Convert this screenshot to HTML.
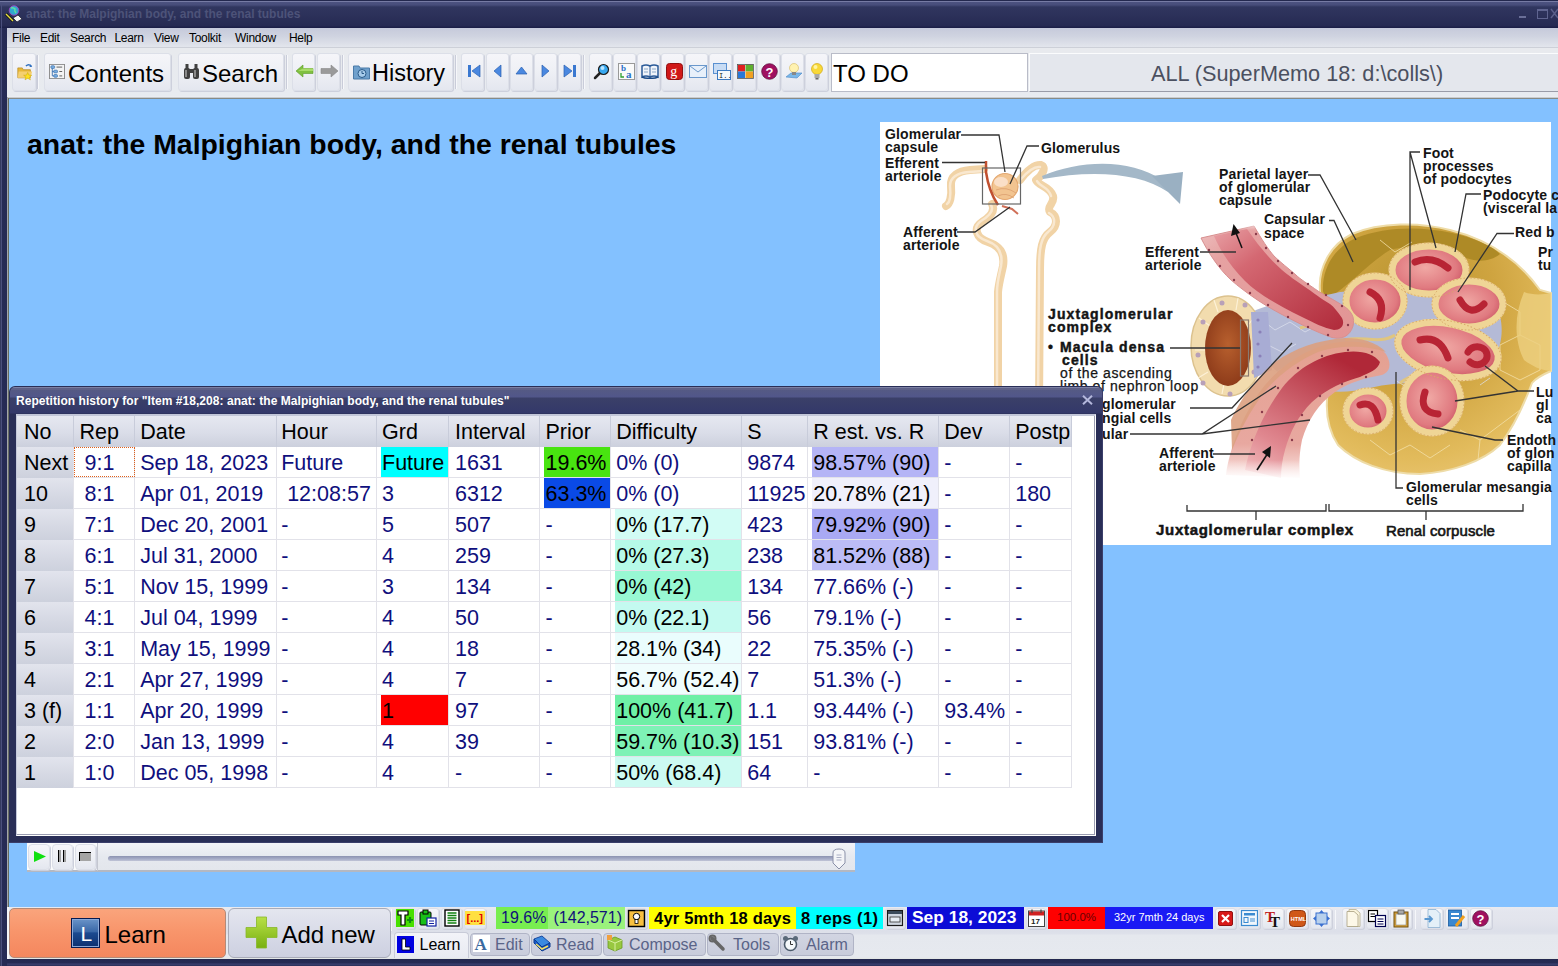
<!DOCTYPE html>
<html><head><meta charset="utf-8">
<style>
*{margin:0;padding:0;box-sizing:border-box}
html,body{width:1558px;height:966px;overflow:hidden;background:#83c1ff;font-family:"Liberation Sans",sans-serif;position:relative}
.a{position:absolute}
svg.a{overflow:visible}
.tb{position:absolute;white-space:pre;line-height:1}
#titlebar{left:0;top:0;width:1558px;height:28px;background:linear-gradient(#23284e 0px,#23284e 1px,#767ba4 1px,#767ba4 2px,#4c5280 2px,#474d7a 5px,#30365f 7px,#2c315a 15px,#262a52 26px,#1c2048 27px,#1c2048 28px)}
#lborder{left:0;top:28px;width:7px;height:938px;background:linear-gradient(90deg,#343a60 0px,#343a60 1px,#4a4f7c 1px,#4a4f7c 2px,#262b55 2px,#252a54 7px)}
#menubar{left:7px;top:28px;width:1551px;height:20px;background:linear-gradient(#c6cadb,#cfd3e0 40%,#dfe2ea 85%,#e4e7ee)}
#toolbar{left:7px;top:47px;width:1551px;height:52px;background:linear-gradient(#e8eaee,#e8ebf0 48px,#eef0f3 49px,#a6a8ac 50px,#a6a8ac 50px,#686e62 51px,#686e62 52px);border-top:1px solid #cdd0d8}
.btn{position:absolute;top:53px;height:38px;border-radius:3px;background:linear-gradient(#f5f5f9,#eef0f5 50%,#e4e7ef);border:1px solid #dcdfe8;box-shadow:1px 1px 0 #cdd0dc}
.sep{position:absolute;top:55px;width:2px;height:34px;background:#c9ccd9;border-right:1px solid #f6f7fa}
.menu span{position:absolute;top:31.5px;font-size:12px;letter-spacing:-0.3px;color:#000;white-space:pre;line-height:1}

.hc{position:absolute;top:0;height:31px;background:linear-gradient(#e6e8f1,#dadde8 55%,#ccd0dd)}
.nc{position:absolute;left:0;width:56px;height:31px;background:linear-gradient(#e2e4ed,#d5d8e3 60%,#cdd1dd)}
.vl{position:absolute;top:0;width:1px;height:372px;background:linear-gradient(#c8ccda 31px,#e2e2e9 31px)}
.hl{position:absolute;left:56px;width:998px;height:1px;background:#e2e2e9}
.cb{position:absolute;height:30px}
.t{position:absolute;white-space:pre;font-size:21.5px;line-height:1;color:#0f0f7d}
.k{color:#000}
</style></head><body>
<div class="a" id="titlebar"></div><div class="a" style="left:1px;top:2px;width:1px;height:26px;background:#4a4f7c"></div>
<div class="a" id="lborder"></div>
<svg class="a" style="left:0;top:0" width="24" height="26" viewBox="0 0 24 26"><path d="M6 14 L13 21" stroke="#111" stroke-width="3"/><path d="M6 14 L13 21" stroke="#e8e040" stroke-width="1.4"/><path d="M13 18 L18 15 L22 19 L17 22 Z" fill="#f4f4f4" stroke="#223" stroke-width="0.8"/><circle cx="14" cy="10.5" r="4.8" fill="#30a8d0" stroke="#a040c0" stroke-width="0.9"/><path d="M11 8 Q13 7 15 9 Q14 11 16 13" stroke="#60e0a0" stroke-width="1.5" fill="none"/></svg>
<div class="tb" style="left:26px;top:8px;font-size:12px;font-weight:bold;color:#4d5379">anat: the Malpighian body, and the renal tubules</div>
<div class="a" style="left:1519px;top:16px;width:7px;height:2px;background:#6a6f98"></div>
<div class="a" style="left:1537px;top:9px;width:11px;height:9.5px;border:1px solid #5f6490;border-top-width:2px"></div><svg class="a" style="left:1550px;top:8px" width="8" height="12" viewBox="0 0 8 12"><path d="M1 1 L8 10 M8 1 L1 10" stroke="#5a5f8a" stroke-width="1.5"/></svg>
<div class="a" id="menubar"></div>
<div class="menu">
<span style="left:12px">File</span><span style="left:40px">Edit</span><span style="left:70px">Search</span><span style="left:114.5px">Learn</span><span style="left:154px">View</span><span style="left:189px">Toolkit</span><span style="left:235px">Window</span><span style="left:289px">Help</span>
</div>
<div class="a" id="toolbar"></div>
<div class="a" style="left:7px;top:97px;width:1px;height:810px;background:#a4a6aa"></div><div class="a" style="left:8px;top:98px;width:1px;height:809px;background:#686e62"></div>
<!-- toolbar buttons -->
<div class="btn" style="left:12px;width:24px"></div>
<div class="sep" style="left:37px"></div>
<div class="btn" style="left:44px;width:127px"></div>
<div class="btn" style="left:178px;width:106px"></div>
<div class="sep" style="left:286px"></div>
<div class="btn" style="left:292px;width:23px"></div>
<div class="btn" style="left:317px;width:23px"></div>
<div class="sep" style="left:342px"></div>
<div class="btn" style="left:348px;width:105px"></div>
<div class="sep" style="left:455px"></div>
<div class="btn" style="left:461px;width:23px"></div>
<div class="btn" style="left:486px;width:23px"></div>
<div class="btn" style="left:510px;width:23px"></div>
<div class="btn" style="left:534px;width:23px"></div>
<div class="btn" style="left:558px;width:23px"></div>
<div class="sep" style="left:583px"></div>
<div class="btn" style="left:589px;width:23px"></div>
<div class="btn" style="left:613px;width:23px"></div>
<div class="btn" style="left:637px;width:23px"></div>
<div class="btn" style="left:661px;width:23px"></div>
<div class="btn" style="left:685px;width:23px"></div>
<div class="btn" style="left:709px;width:23px"></div>
<div class="btn" style="left:733px;width:23px"></div>
<div class="btn" style="left:757px;width:23px"></div>
<div class="btn" style="left:781px;width:23px"></div>
<div class="btn" style="left:805px;width:23px"></div>
<!-- toolbar icons -->
<svg class="a" style="left:16px;top:62px" width="18" height="19" viewBox="0 0 20 20">
<path d="M2 6 L7 6 L8 8 L16 8 L16 17 L2 17 Z" fill="#e8b838" stroke="#b88a20" stroke-width="0.8"/><path d="M3 10 L18 10 L16 17 L2 17 Z" fill="#f5d070"/>
<path d="M11 4 Q14 1 17 4" stroke="#3070c0" stroke-width="1.5" fill="none"/><path d="M16 2 L18 5 L15 5 Z" fill="#3070c0"/>
<path d="M13 11 L14.3 14 L17.5 14.2 L15 16.2 L16 19.3 L13 17.5 L10 19.3 L11 16.2 L8.5 14.2 L11.7 14 Z" fill="#ffe020" stroke="#c0a000" stroke-width="0.5"/></svg>
<svg class="a" style="left:49px;top:64px" width="16" height="15" viewBox="0 0 17 17" preserveAspectRatio="none"><rect x="0.5" y="0.5" width="16" height="16" fill="#f4f4f4" stroke="#8a8a8a"/><g fill="#7ab0e0" stroke="#3a70b0" stroke-width="0.8"><rect x="2" y="2" width="4" height="3" rx="1"/><rect x="5" y="7" width="4" height="3" rx="1"/><rect x="5" y="12" width="4" height="3" rx="1"/></g><path d="M3.5 5 V13.5 H5 M3.5 8.5 H5" stroke="#3a70b0" fill="none"/><path d="M8 3.5 H14 M11 8.5 H14 M11 13.5 H14" stroke="#555" stroke-width="1"/></svg>
<svg class="a" style="left:183px;top:63px" width="17" height="17" viewBox="0 0 17 17"><g fill="#404040"><rect x="1" y="5" width="6" height="11" rx="2"/><rect x="10" y="5" width="6" height="11" rx="2"/><rect x="2.5" y="1" width="3" height="5"/><rect x="11.5" y="1" width="3" height="5"/><rect x="6" y="6" width="5" height="4"/></g><g fill="#8a8a8a"><rect x="2" y="7" width="2" height="7"/><rect x="11" y="7" width="2" height="7"/></g></svg>
<svg class="a" style="left:295px;top:63px" width="19" height="16" viewBox="0 0 19 16"><path d="M1 8 L8 2 L8 5.5 L18 5.5 L18 10.5 L8 10.5 L8 14 Z" fill="#80c040" stroke="#5a9a28" stroke-width="0.6"/><path d="M8 5.5 L18 5.5 L18 8 L3 8 Z" fill="#a8dc68"/></svg>
<svg class="a" style="left:320px;top:63px" width="19" height="16" viewBox="0 0 19 16"><path d="M18 8 L11 2 L11 5.5 L1 5.5 L1 10.5 L11 10.5 L11 14 Z" fill="#9a9a9a" stroke="#888" stroke-width="0.6"/></svg>
<svg class="a" style="left:353px;top:64px" width="17" height="16" viewBox="0 0 17 16"><path d="M0.5 2 L6 2 L7 4 L16.5 4 L16.5 15 L0.5 15 Z" fill="#6fa0cc" stroke="#4a7aa8"/><circle cx="9" cy="9.5" r="4" fill="#a8cceb" stroke="#2a5a88" stroke-width="1"/><path d="M9 7 V9.5 H11" stroke="#2a5a88" fill="none"/></svg>
<svg class="a" style="left:467px;top:64px" width="14" height="14" viewBox="0 0 14 14"><rect x="1" y="1" width="3" height="12" fill="#3a78d0"/><path d="M13 1 L5 7 L13 13 Z" fill="#4a88e0" stroke="#2a60b0" stroke-width="0.7"/></svg>
<svg class="a" style="left:492px;top:64px" width="11" height="14" viewBox="0 0 11 14"><path d="M9 1 L2 7 L9 13 Z" fill="#4a88e0" stroke="#2a60b0" stroke-width="0.7"/></svg>
<svg class="a" style="left:515px;top:66px" width="13" height="9" viewBox="0 0 13 9"><path d="M1 8 L6.5 1 L12 8 Z" fill="#4a88e0" stroke="#2a60b0" stroke-width="0.7"/></svg>
<svg class="a" style="left:540px;top:64px" width="11" height="14" viewBox="0 0 11 14"><path d="M2 1 L9 7 L2 13 Z" fill="#4a88e0" stroke="#2a60b0" stroke-width="0.7"/></svg>
<svg class="a" style="left:563px;top:64px" width="14" height="14" viewBox="0 0 14 14"><rect x="10" y="1" width="3" height="12" fill="#3a78d0"/><path d="M1 1 L9 7 L1 13 Z" fill="#4a88e0" stroke="#2a60b0" stroke-width="0.7"/></svg>
<svg class="a" style="left:593px;top:63px" width="17" height="17" viewBox="0 0 17 17"><path d="M2 15 L7 10" stroke="#222" stroke-width="2.5" stroke-linecap="round"/><circle cx="10.5" cy="6.5" r="5" fill="#38a8f0" stroke="#1a1a1a" stroke-width="1.2"/><circle cx="9.5" cy="5" r="2" fill="#b8e4ff"/></svg>
<svg class="a" style="left:618px;top:63px" width="17" height="17" viewBox="0 0 17 17"><rect x="0.5" y="0.5" width="16" height="16" fill="#fafafa" stroke="#999"/><text x="3" y="8" font-family="Liberation Serif" font-weight="bold" font-size="9" fill="#2a70c8">b</text><text x="8" y="15" font-family="Liberation Serif" font-weight="bold" font-size="11" fill="#2a70c8">a</text><path d="M3 10 V14 H6" stroke="#30a030" stroke-width="1.3" fill="none"/></svg>
<svg class="a" style="left:641px;top:64px" width="18" height="15" viewBox="0 0 18 15"><path d="M1 2 Q5 0 9 2 Q13 0 17 2 L17 13 Q13 11 9 13 Q5 11 1 13 Z" fill="#f0f4fa" stroke="#2a5a98" stroke-width="1.5"/><path d="M9 2 V13" stroke="#2a5a98"/><path d="M3 5 H7 M3 8 H7 M11 5 H15 M11 8 H15" stroke="#8aa8c8"/><path d="M1 13 Q5 15 9 14 Q13 15 17 13" stroke="#1a4a88" stroke-width="1.5" fill="none"/></svg>
<svg class="a" style="left:666px;top:63px" width="17" height="17" viewBox="0 0 17 17"><rect x="0.5" y="0.5" width="16" height="16" rx="3" fill="#d01818" stroke="#901010"/><text x="4.2" y="13" font-family="Liberation Serif" font-size="14" fill="#fff">g</text></svg>
<svg class="a" style="left:689px;top:65px" width="18" height="13" viewBox="0 0 18 13"><rect x="0.5" y="0.5" width="17" height="12" fill="#e8f0fa" stroke="#6a98cc"/><path d="M1 1 L9 7 L17 1" stroke="#6a98cc" fill="none"/></svg>
<svg class="a" style="left:713px;top:63px" width="18" height="17" viewBox="0 0 18 17"><rect x="0.5" y="0.5" width="13" height="10" fill="#c8dcf4" stroke="#5a90d0"/><rect x="4.5" y="7.5" width="13" height="9" fill="#f4f8fc" stroke="#3a78c0"/><text x="6" y="15" font-family="Liberation Mono" font-size="7" fill="#222">I..</text></svg>
<svg class="a" style="left:737px;top:64px" width="17" height="15" viewBox="0 0 17 15"><rect x="1" y="1" width="7" height="6.5" fill="#e02020"/><rect x="8.5" y="0.5" width="7.5" height="7" fill="#60b030"/><rect x="1" y="7.5" width="7" height="6.5" fill="#2878d8"/><rect x="8.5" y="7.5" width="7.5" height="6.5" fill="#f0a020"/><rect x="0.5" y="0.5" width="16" height="14" fill="none" stroke="#555" stroke-width="0.8"/></svg>
<svg class="a" style="left:761px;top:63px" width="17" height="17" viewBox="0 0 17 17"><circle cx="8.5" cy="8.5" r="7.8" fill="#a01060" stroke="#601040" stroke-width="0.8"/><text x="4.6" y="13.5" font-family="Liberation Sans" font-weight="bold" font-size="13" fill="#fff">?</text></svg>
<svg class="a" style="left:785px;top:62px" width="18" height="19" viewBox="0 0 18 19"><path d="M1 15 L6 11 L17 11 L12 16 Z" fill="#7ab8e8" stroke="#4a88c8" stroke-width="0.6"/><circle cx="9" cy="6" r="4.5" fill="#fff2b0" stroke="#d8c070" stroke-width="0.7"/><rect x="7" y="10" width="4" height="3" fill="#888"/></svg>
<svg class="a" style="left:810px;top:62px" width="14" height="19" viewBox="0 0 14 19"><circle cx="7" cy="7" r="5.5" fill="#f8d838" stroke="#d0a818" stroke-width="0.7"/><circle cx="5.5" cy="5" r="2" fill="#fff4a0"/><rect x="4.5" y="12" width="5" height="4" fill="#a8a8a8"/><rect x="5.5" y="16" width="3" height="1.5" fill="#666"/></svg>
<div class="tb" style="left:68px;top:62px;font-size:24px">Contents</div>
<div class="tb" style="left:202px;top:62px;font-size:24px">Search</div>
<div class="tb" style="left:372px;top:62px;font-size:23.5px">History</div>
<div class="a" style="left:831px;top:53px;width:197px;height:39px;background:#fff;border:1px solid #b9bcc8"></div>
<div class="tb" style="left:833px;top:62px;font-size:24px">TO DO</div>
<div class="a" style="left:1029px;top:53px;width:529px;height:39px;background:#e4e7ed;border-top:1px solid #fbfcfd;border-left:1px solid #fbfcfd;border-bottom:1px solid #9a9ca8"></div>
<div class="tb" style="left:1151px;top:63px;font-size:21.7px;color:#4b5060">ALL (SuperMemo 18: d:\colls\)</div>

<!-- content -->
<div class="tb" style="left:27px;top:129.5px;font-size:28.4px;font-weight:bold;color:#000">anat: the Malpighian body, and the renal tubules</div>

<!-- image placeholder -->
<svg class="a" style="left:880px;top:122px" width="671" height="423" viewBox="880 122 671 423">
<defs>
<linearGradient id="lumE" x1="0" y1="0" x2="1" y2="1"><stop offset="0" stop-color="#e8a0a4"/><stop offset="0.3" stop-color="#d46872"/><stop offset="1" stop-color="#b02a3a"/></linearGradient>
<linearGradient id="lumA" x1="0" y1="1" x2="0.6" y2="0"><stop offset="0" stop-color="#f4c4c4"/><stop offset="0.3" stop-color="#e08890"/><stop offset="1" stop-color="#b02838"/></linearGradient>
<linearGradient id="wallE" x1="0" y1="0" x2="1" y2="1"><stop offset="0" stop-color="#eec0c0"/><stop offset="0.2" stop-color="#e6a2a2"/><stop offset="1" stop-color="#e29494"/></linearGradient>
<linearGradient id="wallA" x1="0" y1="1" x2="0" y2="0"><stop offset="0" stop-color="#fbe6e4"/><stop offset="0.25" stop-color="#e8a8a0"/><stop offset="1" stop-color="#e4a090"/></linearGradient>
<radialGradient id="gold" cx="0.4" cy="0.3" r="0.8"><stop offset="0" stop-color="#b89430"/><stop offset="0.45" stop-color="#cfa440"/><stop offset="0.8" stop-color="#e2bb5c"/><stop offset="1" stop-color="#ecc878"/></radialGradient>
<radialGradient id="md" cx="0.5" cy="0.45" r="0.6"><stop offset="0" stop-color="#b8602e"/><stop offset="1" stop-color="#8a3818"/></radialGradient>
<radialGradient id="cap" cx="0.45" cy="0.45" r="0.6"><stop offset="0" stop-color="#f0a8a4"/><stop offset="0.7" stop-color="#e07a80"/><stop offset="1" stop-color="#c85060"/></radialGradient>
<linearGradient id="fadeTop" x1="0" y1="0" x2="0" y2="1"><stop offset="0" stop-color="#fff" stop-opacity="1"/><stop offset="1" stop-color="#fff" stop-opacity="0"/></linearGradient>
</defs>
<rect x="880" y="122" width="671" height="423" fill="#fff"/>
<!-- nephron tubules -->
<g fill="none" stroke="#f1d3a6" stroke-width="8" stroke-linecap="round" stroke-linejoin="round">
<path d="M946 206 C950 204 952 196 951 186 C950 176 958 171 970 170 L984 169"/>
<path d="M992 204 C995 210 992 216 982 222 C973 228 976 238 988 242 C1000 246 1005 254 1003 266 C1001 276 999 282 998 292 L998 545"/>
<path d="M1020 180 C1026 172 1034 164 1041 165 C1047 167 1042 176 1036 180 C1038 186 1050 186 1053 196 C1055 204 1046 206 1050 212 C1058 216 1058 226 1050 232 C1042 238 1040 248 1040 270 L1038 545"/>
</g>
<g fill="none" stroke="#f9e8d0" stroke-width="2.5" stroke-linecap="round" stroke-linejoin="round">
<path d="M947 204 C950 202 951 196 950 186 C950 177 957 173 969 172 L983 171"/>
<path d="M991 205 C994 210 991 215 981 221 C972 228 975 237 987 241 C999 245 1003 254 1001 266 C999 276 997 282 997 292 L997 545"/>
<path d="M1021 179 C1027 172 1034 166 1040 167 M1037 181 C1040 187 1049 187 1051 196 M1049 213 C1056 217 1056 226 1048 232 C1041 238 1039 248 1039 270 L1037 545"/>
</g>
<circle cx="1005" cy="186.5" r="13" fill="#f2c490" stroke="#e4a870" stroke-width="1.2"/>
<ellipse cx="1001" cy="182" rx="7" ry="5" fill="#fbe6d4" opacity="0.8"/>
<path d="M996 190 Q1006 186 1016 193 M998 196 Q1006 192 1014 198" stroke="#dca070" fill="none" stroke-width="0.8"/>
<path d="M986 161 L986 172 C988 186 992 196 998 205" stroke="#c05030" stroke-width="2.5" fill="none"/>
<path d="M1002 206 L1012 209 L1018 214" stroke="#d07058" stroke-width="2" fill="none"/>
<rect x="982.5" y="168" width="38" height="36" fill="none" stroke="#666" stroke-width="1.2"/>
<!-- arrow -->
<path d="M1042 176 C1080 160 1130 158 1162 180 L1168 192 C1140 172 1090 170 1043 179 Z" fill="#a4b8c8"/>
<path d="M1152 176 L1183 172 L1180 204 Z" fill="#9ab0c2"/>
<!-- golden capsule -->
<path d="M1320 291 C1318 268 1330 245 1352 234 C1380 222 1420 222 1450 230 C1490 240 1520 262 1540 290 L1551 293 L1551 371 C1544 374 1536 378 1532 383 C1525 402 1515 425 1500 445 C1482 462 1452 472 1420 474 C1385 474 1355 462 1338 445 C1328 430 1325 410 1328 390 Z" fill="url(#gold)" stroke="#eedca8" stroke-width="2"/>
<path d="M1323 291 C1322 268 1334 248 1356 238 C1384 227 1420 226 1452 233 C1475 238 1492 246 1500 254 C1490 262 1478 262 1466 258 C1440 248 1410 244 1390 250 C1370 262 1350 285 1326 300 Z" fill="#ae8a26"/>
<g fill="none" stroke="#f4e0a8" stroke-width="1" opacity="0.8">
<path d="M1500 300 L1520 312 L1520 335 L1500 345 L1482 335 L1482 312 Z"/>
<path d="M1520 335 L1540 345 L1540 370 L1520 380 L1500 370 L1500 345"/>
<path d="M1460 430 L1480 440 L1478 460 M1480 440 L1500 425 L1520 410"/>
<path d="M1370 440 L1390 455 L1410 445 L1430 458 L1450 445"/>
<path d="M1342 300 L1358 290 L1372 300 M1380 240 L1395 252 L1412 242"/>
</g>
<path d="M1524 292 C1535 296 1545 294 1551 293 L1551 371 C1540 370 1532 366 1524 360 C1514 340 1514 315 1524 292 Z" fill="#eccf80" opacity="0.8"/>
<!-- mesangial blue region -->
<path d="M1252 312 C1275 300 1310 300 1340 292 C1400 286 1470 296 1500 316 C1506 340 1496 370 1470 380 C1440 384 1400 380 1370 388 C1340 395 1315 392 1292 380 C1265 368 1250 345 1252 312 Z" fill="#b4bad6"/>
<g fill="none" stroke="#dfe3f0" stroke-width="0.8" opacity="0.9">
<path d="M1262 320 L1275 330 L1290 322 L1305 332 L1320 324 M1268 345 L1282 352 L1296 344 M1262 365 L1276 372 L1290 364 L1304 372"/>
<path d="M1410 330 L1420 340 L1432 333 M1395 380 L1408 388 L1420 380 M1480 385 L1490 378"/>
</g>
<g fill="none" stroke="#e8c870" stroke-width="3" opacity="0.85"><path d="M1345 340 C1360 335 1380 345 1395 335"/><path d="M1330 380 C1345 372 1360 378 1380 372"/><path d="M1400 383 C1410 375 1425 372 1440 376"/><path d="M1300 328 C1320 322 1335 330 1352 322"/></g>
<!-- macula densa -->
<ellipse cx="1228" cy="346" rx="37" ry="50" fill="#f2dcae" stroke="#dcc28e" stroke-width="1.5"/>
<g stroke="#fff4dc" stroke-width="1.2" opacity="0.9"><path d="M1199 318 L1210 326 M1214 300 L1218 312 M1238 298 L1236 310 M1195 350 L1206 350 M1198 378 L1208 372 M1222 394 L1224 384 M1252 320 L1246 328"/></g>
<ellipse cx="1228" cy="348" rx="23" ry="38" fill="url(#md)"/>
<g fill="#b8a0b8"><circle cx="1203" cy="322" r="2.5"/><circle cx="1222" cy="303" r="2.5"/><circle cx="1245" cy="305" r="2.5"/><circle cx="1198" cy="355" r="2.5"/><circle cx="1203" cy="383" r="2.5"/><circle cx="1230" cy="394" r="2.5"/><circle cx="1254" cy="372" r="2.5"/></g>
<path d="M1251 312 L1268 312 L1272 370 L1254 378 Z" fill="#a8acd4"/>
<g fill="#8a80b8"><circle cx="1258" cy="320" r="1.6"/><circle cx="1260" cy="332" r="1.6"/><circle cx="1258" cy="344" r="1.6"/><circle cx="1260" cy="356" r="1.6"/><circle cx="1258" cy="367" r="1.6"/></g>
<rect x="1240.5" y="320" width="8" height="56" fill="none" stroke="#8a7a70" stroke-width="1.2"/>
<!-- capillary loops -->
<g stroke="#efd596" stroke-width="7">
<ellipse cx="1429" cy="270" rx="37" ry="24" fill="url(#cap)"/>
<ellipse cx="1375" cy="301" rx="29" ry="25" fill="url(#cap)"/>
<ellipse cx="1469" cy="304" rx="34" ry="23" fill="url(#cap)"/>
<ellipse cx="1448" cy="350" rx="51" ry="26" fill="url(#cap)" transform="rotate(12 1448 350)"/>
<ellipse cx="1432" cy="401" rx="29" ry="32" fill="url(#cap)"/>
<ellipse cx="1368" cy="411" rx="22" ry="20" fill="url(#cap)"/>
</g>
<g fill="none" stroke="#d8a868" stroke-width="1" stroke-dasharray="1.5 2">
<ellipse cx="1429" cy="270" rx="40" ry="27"/><ellipse cx="1375" cy="301" rx="32" ry="28"/><ellipse cx="1469" cy="304" rx="37" ry="26"/><ellipse cx="1448" cy="350" rx="54" ry="29" transform="rotate(12 1448 350)"/><ellipse cx="1432" cy="401" rx="32" ry="35"/><ellipse cx="1368" cy="411" rx="25" ry="23"/>
</g>
<g fill="none" stroke="#b82434" stroke-width="7" stroke-linecap="round">
<path d="M1415 262 Q1432 255 1448 268"/><path d="M1370 292 Q1386 300 1380 318"/><path d="M1460 300 Q1470 318 1484 304"/><path d="M1420 340 Q1440 335 1448 358"/><path d="M1468 352 A10 9 0 1 1 1470 362"/><path d="M1425 392 Q1418 412 1438 414"/><path d="M1360 405 Q1374 400 1378 420"/>
</g>
<!-- efferent arteriole -->
<path d="M1201 238 C1208 252 1218 268 1231 280 C1245 292 1262 304 1281 314 C1298 323 1316 332 1332 337.5 C1342 340 1350 336 1353 326 C1355 318 1352 313 1347 308.5 C1340 303 1326 296 1318 291 C1308 284 1300 279 1296 275 C1288 268 1280 262 1274 256 C1268 249 1262 240 1254 226 Z" fill="url(#wallE)" stroke="#d89090" stroke-width="1"/>
<path d="M1214 236 C1220 250 1230 266 1245 281 C1258 294 1280 306 1300 316 C1314 323 1324 328 1334 330 C1342 330 1345 324 1342 318 C1338 312 1334 307 1330 304 C1320 298 1314 293 1308 289 C1296 281 1288 275 1282 270 C1272 261 1266 254 1262 249 C1256 242 1252 236 1247 229 Z" fill="url(#lumE)"/>
<g fill="#8a3a4a"><circle cx="1209" cy="250" r="1.2"/><circle cx="1220" cy="266" r="1.2"/><circle cx="1234" cy="280" r="1.2"/><circle cx="1250" cy="293" r="1.2"/><circle cx="1268" cy="305" r="1.2"/><circle cx="1288" cy="317" r="1.2"/><circle cx="1308" cy="327" r="1.2"/><circle cx="1328" cy="335" r="1.2"/><circle cx="1348" cy="325" r="1.2"/><circle cx="1256" cy="234" r="1.2"/><circle cx="1266" cy="248" r="1.2"/><circle cx="1278" cy="261" r="1.2"/><circle cx="1292" cy="273" r="1.2"/><circle cx="1308" cy="284" r="1.2"/><circle cx="1326" cy="295" r="1.2"/><circle cx="1342" cy="306" r="1.2"/></g>
<rect x="1195" y="220" width="70" height="10" fill="url(#fadeTop)"/>
<!-- afferent arteriole -->
<path d="M1226 475 C1230 445 1245 410 1265 385 C1285 362 1310 346 1340 342 C1360 340 1378 344 1386 354 C1392 364 1390 372 1382 375 C1365 378 1350 382 1335 392 C1318 404 1308 420 1302 440 C1299 455 1299 465 1300 478 Z" fill="url(#wallA)"/>
<path d="M1231 420 C1240 400 1255 378 1275 362 C1295 348 1318 340 1345 338 C1362 338 1376 342 1386 352 C1370 346 1340 344 1318 352 C1295 362 1275 378 1262 395 C1250 412 1240 430 1232 450 Z" fill="#dca080" opacity="0.9"/>
<path d="M1245 470 C1250 445 1262 415 1282 388 C1298 368 1320 355 1345 352 C1362 350 1374 354 1380 362 C1378 370 1370 372 1360 377 C1345 381 1328 388 1312 402 C1298 416 1290 432 1285 450 C1282 460 1281 470 1281 478 Z" fill="url(#lumA)"/>
<g fill="#8a3a4a"><circle cx="1252" cy="440" r="1.2"/><circle cx="1262" cy="412" r="1.2"/><circle cx="1278" cy="388" r="1.2"/><circle cx="1298" cy="368" r="1.2"/><circle cx="1322" cy="356" r="1.2"/><circle cx="1348" cy="350" r="1.2"/><circle cx="1372" cy="352" r="1.2"/><circle cx="1292" cy="440" r="1.2"/><circle cx="1302" cy="415" r="1.2"/><circle cx="1320" cy="396" r="1.2"/><circle cx="1342" cy="384" r="1.2"/><circle cx="1366" cy="377" r="1.2"/></g>
<rect x="1215" y="460" width="95" height="20" fill="url(#fadeTop)" transform="rotate(180 1262 470)"/>
<!-- leader lines -->
<g fill="none" stroke="#333" stroke-width="1.3">
<path d="M961 135 L999 135 L1005 172"/>
<path d="M942 162.5 L985 162.5"/>
<path d="M1039 146 L1027 146 L1010 184"/>
<path d="M957 232 L975 232 L1010 207"/>
<path d="M1308 175 L1320 175 L1356 240"/>
<path d="M1329 220.5 L1334 220.5 L1353 262"/>
<path d="M1200 252 L1236 252"/>
<path d="M1420 152 L1410 152 L1410 290 M1410 152 L1436 248"/>
<path d="M1481 194 L1466 194 L1455 252"/>
<path d="M1514 233.5 L1497 233.5 L1458 292"/>
<path d="M1170 348 L1240 348"/>
<path d="M1190 408 L1232 408 L1292 343"/>
<path d="M1130 434 L1202 434 L1276 386 M1202 434 L1310 420"/>
<path d="M1213 454 L1255 454"/>
<path d="M1534 391 L1518 391 L1485 366 M1518 391 L1455 401"/>
<path d="M1503 440 L1495 440 L1432 427"/>
<path d="M1403 488 L1396 488 L1396 372"/>
<path d="M1187 505 L1187 511 L1326 511 L1326 504 M1256 511 L1256 520"/>
<path d="M1329 504 L1329 511 L1523 511 L1523 504 M1426 511 L1426 520"/>
</g>
<path d="M1242 248 L1236 233" stroke="#111" stroke-width="1.5"/><path d="M1231 236 L1233.5 224 L1240 233 Z" fill="#111"/>
<path d="M1257 470 L1268 453" stroke="#111" stroke-width="1.6"/><path d="M1262 452 L1271 446 L1270 458 Z" fill="#111"/>
<!-- labels -->
<g font-family="Liberation Sans" font-weight="bold" font-size="14" fill="#141414" letter-spacing="0.15" transform="translate(0 1.5)">
<text x="885" y="137">Glomerular</text><text x="885" y="150">capsule</text>
<text x="885" y="166">Efferent</text><text x="885" y="179">arteriole</text>
<text x="1041" y="151">Glomerulus</text>
<text x="903" y="235">Afferent</text><text x="903" y="248">arteriole</text>
<text x="1219" y="177">Parietal layer</text><text x="1219" y="190">of glomerular</text><text x="1219" y="203">capsule</text>
<text x="1264" y="222">Capsular</text><text x="1264" y="236">space</text>
<text x="1145" y="255">Efferent</text><text x="1145" y="268">arteriole</text>
<text x="1423" y="156">Foot</text><text x="1423" y="169">processes</text><text x="1423" y="182">of podocytes</text>
<text x="1483" y="198">Podocyte c</text><text x="1483" y="211">(visceral la</text>
<text x="1515" y="235">Red b</text>
<text x="1538" y="255">Pr</text><text x="1538" y="268">tu</text>
<g letter-spacing="1.1" stroke="#141414" stroke-width="0.45"><text x="1048" y="317">Juxtaglomerular</text><text x="1048" y="330">complex</text>
<text x="1048" y="350">•</text><text x="1060" y="350">Macula densa</text><text x="1062" y="363">cells</text></g>
<text x="1102" y="407">glomerular</text><text x="1102" y="421">ngial cells</text><text x="1102" y="437">ular</text>
<text x="1159" y="456">Afferent</text><text x="1159" y="469">arteriole</text>
<text x="1536" y="395">Lu</text><text x="1536" y="408">gl</text><text x="1536" y="421">ca</text>
<text x="1507" y="443">Endoth</text><text x="1507" y="456">of glon</text><text x="1507" y="469">capilla</text>
<text x="1406" y="490">Glomerular mesangia</text><text x="1406" y="503">cells</text>
<text x="1156" y="533" letter-spacing="0.7" font-size="15" stroke="#141414" stroke-width="0.5">Juxtaglomerular complex</text>
</g>
<g font-family="Liberation Sans" font-size="14" fill="#141414" transform="translate(0 1)">
<text x="1060" y="377" letter-spacing="0.6" stroke="#141414" stroke-width="0.25">of the ascending</text><text x="1060" y="390" letter-spacing="0.6" stroke="#141414" stroke-width="0.25">limb of nephron loop</text>
<text x="1386" y="534.5" font-size="15" stroke="#141414" stroke-width="0.6" letter-spacing="0.1">Renal corpuscle</text>
</g>
</svg>


<!-- dialog -->
<div class="a" style="left:9px;top:386px;width:1094px;height:457px;background:#292e57;border-radius:6px 6px 0 0;box-shadow:inset -1px -1px 0 #3a3e6a"></div>
<div class="a" style="left:10px;top:387px;width:1092px;height:27px;border-radius:5px 5px 0 0;background:linear-gradient(#7c80a3 0px,#7c80a3 1px,#5e6188 1px,#5e6188 3px,#555a84 3px,#51568a 10px,#3b4068 11px,#33386a 26px,#2a2e56 27px)"></div>
<div class="tb" style="left:16px;top:394.5px;font-size:12px;font-weight:bold;color:#fff;letter-spacing:0.05px">Repetition history for "Item #18,208: anat: the Malpighian body, and the renal tubules"</div>
<svg class="a" style="left:1082px;top:395px" width="11" height="10" viewBox="0 0 11 10"><path d="M1 0.8 L10 9.2 M10 0.8 L1 9.2" stroke="#b4b8dc" stroke-width="2"/></svg>
<div class="a" style="left:16px;top:414px;width:1080px;height:422px;background:#fff;border:1px solid #fff;border-top:2px solid #c2c6d8;border-left-color:#c4c8da;box-shadow:inset -1px -1px 0 #9a9cb0"></div>
<div class="a" style="left:17px;top:416px;width:1054px;height:372px">
<div class="hc" style="left:0px;width:56px"></div>
<div class="hc" style="left:56px;width:61px"></div>
<div class="hc" style="left:117px;width:142px"></div>
<div class="hc" style="left:259px;width:100px"></div>
<div class="hc" style="left:359px;width:72px"></div>
<div class="hc" style="left:431px;width:91px"></div>
<div class="hc" style="left:522px;width:71px"></div>
<div class="hc" style="left:593px;width:131px"></div>
<div class="hc" style="left:724px;width:66px"></div>
<div class="hc" style="left:790px;width:131px"></div>
<div class="hc" style="left:921px;width:71px"></div>
<div class="hc" style="left:992px;width:62px"></div>
<div class="nc" style="top:31px"></div>
<div class="nc" style="top:62px"></div>
<div class="nc" style="top:93px"></div>
<div class="nc" style="top:124px"></div>
<div class="nc" style="top:155px"></div>
<div class="nc" style="top:186px"></div>
<div class="nc" style="top:217px"></div>
<div class="nc" style="top:248px"></div>
<div class="nc" style="top:279px"></div>
<div class="nc" style="top:310px"></div>
<div class="nc" style="top:341px"></div>
<div class="vl" style="left:56px"></div>
<div class="vl" style="left:117px"></div>
<div class="vl" style="left:259px"></div>
<div class="vl" style="left:359px"></div>
<div class="vl" style="left:431px"></div>
<div class="vl" style="left:522px"></div>
<div class="vl" style="left:593px"></div>
<div class="vl" style="left:724px"></div>
<div class="vl" style="left:790px"></div>
<div class="vl" style="left:921px"></div>
<div class="vl" style="left:992px"></div>
<div class="vl" style="left:1054px"></div>
<div class="hl" style="top:61px"></div>
<div class="hl" style="top:92px"></div>
<div class="hl" style="top:123px"></div>
<div class="hl" style="top:154px"></div>
<div class="hl" style="top:185px"></div>
<div class="hl" style="top:216px"></div>
<div class="hl" style="top:247px"></div>
<div class="hl" style="top:278px"></div>
<div class="hl" style="top:309px"></div>
<div class="hl" style="top:340px"></div>
<div class="hl" style="top:371px"></div>
<div class="t k" style="left:7px;top:6px">No</div>
<div class="t k" style="left:62.5px;top:6px">Rep</div>
<div class="t k" style="left:123.19999999999999px;top:6px">Date</div>
<div class="t k" style="left:264.2px;top:6px">Hour</div>
<div class="t k" style="left:365px;top:6px">Grd</div>
<div class="t k" style="left:438px;top:6px">Interval</div>
<div class="t k" style="left:528.5px;top:6px">Prior</div>
<div class="t k" style="left:599.2px;top:6px">Difficulty</div>
<div class="t k" style="left:730.2px;top:6px">S</div>
<div class="t k" style="left:796.2px;top:6px">R est. vs. R</div>
<div class="t k" style="left:927.2px;top:6px">Dev</div>
<div class="t k" style="left:998.2px;top:6px">Postp</div>
<div class="t k" style="left:7px;top:37px">Next</div>
<div class="t" style="left:67.5px;top:37px">9:1</div>
<div class="t" style="left:123.19999999999999px;top:37px">Sep 18, 2023</div>
<div class="t" style="left:264.2px;top:37px">Future</div>
<div class="cb" style="left:364px;top:31px;width:67px;background:#00ffff"></div>
<div class="t k" style="left:365px;top:37px">Future</div>
<div class="t" style="left:438px;top:37px">1631</div>
<div class="cb" style="left:527px;top:31px;width:66px;background:#48e410"></div>
<div class="t k" style="left:528.5px;top:37px">19.6%</div>
<div class="t" style="left:599.2px;top:37px">0% (0)</div>
<div class="t" style="left:730.2px;top:37px">9874</div>
<div class="cb" style="left:795px;top:31px;width:126px;background:#b4b4f6"></div>
<div class="t k" style="left:796.2px;top:37px">98.57% (90)</div>
<div class="t" style="left:927.2px;top:37px">-</div>
<div class="t" style="left:998.2px;top:37px">-</div>
<div class="t k" style="left:7px;top:68px">10</div>
<div class="t" style="left:67.5px;top:68px">8:1</div>
<div class="t" style="left:123.19999999999999px;top:68px">Apr 01, 2019</div>
<div class="t" style="left:264.2px;top:68px"> 12:08:57</div>
<div class="t" style="left:365px;top:68px">3</div>
<div class="t" style="left:438px;top:68px">6312</div>
<div class="cb" style="left:527px;top:62px;width:66px;background:#0a4ae6"></div>
<div class="t k" style="left:528.5px;top:68px">63.3%</div>
<div class="t" style="left:599.2px;top:68px">0% (0)</div>
<div class="t" style="left:730.2px;top:68px">11925</div>
<div class="cb" style="left:795px;top:62px;width:126px;background:#f0f0fb"></div>
<div class="t k" style="left:796.2px;top:68px">20.78% (21)</div>
<div class="t" style="left:927.2px;top:68px">-</div>
<div class="t" style="left:998.2px;top:68px">180</div>
<div class="t k" style="left:7px;top:99px">9</div>
<div class="t" style="left:67.5px;top:99px">7:1</div>
<div class="t" style="left:123.19999999999999px;top:99px">Dec 20, 2001</div>
<div class="t" style="left:264.2px;top:99px">-</div>
<div class="t" style="left:365px;top:99px">5</div>
<div class="t" style="left:438px;top:99px">507</div>
<div class="t" style="left:528.5px;top:99px">-</div>
<div class="cb" style="left:598px;top:93px;width:126px;background:#d2fcf5"></div>
<div class="t k" style="left:599.2px;top:99px">0% (17.7)</div>
<div class="t" style="left:730.2px;top:99px">423</div>
<div class="cb" style="left:795px;top:93px;width:126px;background:#a9a9f4"></div>
<div class="t k" style="left:796.2px;top:99px">79.92% (90)</div>
<div class="t" style="left:927.2px;top:99px">-</div>
<div class="t" style="left:998.2px;top:99px">-</div>
<div class="t k" style="left:7px;top:130px">8</div>
<div class="t" style="left:67.5px;top:130px">6:1</div>
<div class="t" style="left:123.19999999999999px;top:130px">Jul 31, 2000</div>
<div class="t" style="left:264.2px;top:130px">-</div>
<div class="t" style="left:365px;top:130px">4</div>
<div class="t" style="left:438px;top:130px">259</div>
<div class="t" style="left:528.5px;top:130px">-</div>
<div class="cb" style="left:598px;top:124px;width:126px;background:#b6fae8"></div>
<div class="t k" style="left:599.2px;top:130px">0% (27.3)</div>
<div class="t" style="left:730.2px;top:130px">238</div>
<div class="cb" style="left:795px;top:124px;width:126px;background:#bcbcf6"></div>
<div class="t k" style="left:796.2px;top:130px">81.52% (88)</div>
<div class="t" style="left:927.2px;top:130px">-</div>
<div class="t" style="left:998.2px;top:130px">-</div>
<div class="t k" style="left:7px;top:161px">7</div>
<div class="t" style="left:67.5px;top:161px">5:1</div>
<div class="t" style="left:123.19999999999999px;top:161px">Nov 15, 1999</div>
<div class="t" style="left:264.2px;top:161px">-</div>
<div class="t" style="left:365px;top:161px">3</div>
<div class="t" style="left:438px;top:161px">134</div>
<div class="t" style="left:528.5px;top:161px">-</div>
<div class="cb" style="left:598px;top:155px;width:126px;background:#98f8d3"></div>
<div class="t k" style="left:599.2px;top:161px">0% (42)</div>
<div class="t" style="left:730.2px;top:161px">134</div>
<div class="t" style="left:796.2px;top:161px">77.66% (-)</div>
<div class="t" style="left:927.2px;top:161px">-</div>
<div class="t" style="left:998.2px;top:161px">-</div>
<div class="t k" style="left:7px;top:192px">6</div>
<div class="t" style="left:67.5px;top:192px">4:1</div>
<div class="t" style="left:123.19999999999999px;top:192px">Jul 04, 1999</div>
<div class="t" style="left:264.2px;top:192px">-</div>
<div class="t" style="left:365px;top:192px">4</div>
<div class="t" style="left:438px;top:192px">50</div>
<div class="t" style="left:528.5px;top:192px">-</div>
<div class="cb" style="left:598px;top:186px;width:126px;background:#c4faf0"></div>
<div class="t k" style="left:599.2px;top:192px">0% (22.1)</div>
<div class="t" style="left:730.2px;top:192px">56</div>
<div class="t" style="left:796.2px;top:192px">79.1% (-)</div>
<div class="t" style="left:927.2px;top:192px">-</div>
<div class="t" style="left:998.2px;top:192px">-</div>
<div class="t k" style="left:7px;top:223px">5</div>
<div class="t" style="left:67.5px;top:223px">3:1</div>
<div class="t" style="left:123.19999999999999px;top:223px">May 15, 1999</div>
<div class="t" style="left:264.2px;top:223px">-</div>
<div class="t" style="left:365px;top:223px">4</div>
<div class="t" style="left:438px;top:223px">18</div>
<div class="t" style="left:528.5px;top:223px">-</div>
<div class="cb" style="left:598px;top:217px;width:126px;background:#eafdfd"></div>
<div class="t k" style="left:599.2px;top:223px">28.1% (34)</div>
<div class="t" style="left:730.2px;top:223px">22</div>
<div class="t" style="left:796.2px;top:223px">75.35% (-)</div>
<div class="t" style="left:927.2px;top:223px">-</div>
<div class="t" style="left:998.2px;top:223px">-</div>
<div class="t k" style="left:7px;top:254px">4</div>
<div class="t" style="left:67.5px;top:254px">2:1</div>
<div class="t" style="left:123.19999999999999px;top:254px">Apr 27, 1999</div>
<div class="t" style="left:264.2px;top:254px">-</div>
<div class="t" style="left:365px;top:254px">4</div>
<div class="t" style="left:438px;top:254px">7</div>
<div class="t" style="left:528.5px;top:254px">-</div>
<div class="cb" style="left:598px;top:248px;width:126px;background:#f0fdfd"></div>
<div class="t k" style="left:599.2px;top:254px">56.7% (52.4)</div>
<div class="t" style="left:730.2px;top:254px">7</div>
<div class="t" style="left:796.2px;top:254px">51.3% (-)</div>
<div class="t" style="left:927.2px;top:254px">-</div>
<div class="t" style="left:998.2px;top:254px">-</div>
<div class="t k" style="left:7px;top:285px">3 (f)</div>
<div class="t" style="left:67.5px;top:285px">1:1</div>
<div class="t" style="left:123.19999999999999px;top:285px">Apr 20, 1999</div>
<div class="t" style="left:264.2px;top:285px">-</div>
<div class="cb" style="left:364px;top:279px;width:67px;background:#ff0000"></div>
<div class="t k" style="left:365px;top:285px">1</div>
<div class="t" style="left:438px;top:285px">97</div>
<div class="t" style="left:528.5px;top:285px">-</div>
<div class="cb" style="left:598px;top:279px;width:126px;background:#6ef0a6"></div>
<div class="t k" style="left:599.2px;top:285px">100% (41.7)</div>
<div class="t" style="left:730.2px;top:285px">1.1</div>
<div class="t" style="left:796.2px;top:285px">93.44% (-)</div>
<div class="t" style="left:927.2px;top:285px">93.4%</div>
<div class="t" style="left:998.2px;top:285px">-</div>
<div class="t k" style="left:7px;top:316px">2</div>
<div class="t" style="left:67.5px;top:316px">2:0</div>
<div class="t" style="left:123.19999999999999px;top:316px">Jan 13, 1999</div>
<div class="t" style="left:264.2px;top:316px">-</div>
<div class="t" style="left:365px;top:316px">4</div>
<div class="t" style="left:438px;top:316px">39</div>
<div class="t" style="left:528.5px;top:316px">-</div>
<div class="cb" style="left:598px;top:310px;width:126px;background:#7ef2b6"></div>
<div class="t k" style="left:599.2px;top:316px">59.7% (10.3)</div>
<div class="t" style="left:730.2px;top:316px">151</div>
<div class="t" style="left:796.2px;top:316px">93.81% (-)</div>
<div class="t" style="left:927.2px;top:316px">-</div>
<div class="t" style="left:998.2px;top:316px">-</div>
<div class="t k" style="left:7px;top:347px">1</div>
<div class="t" style="left:67.5px;top:347px">1:0</div>
<div class="t" style="left:123.19999999999999px;top:347px">Dec 05, 1998</div>
<div class="t" style="left:264.2px;top:347px">-</div>
<div class="t" style="left:365px;top:347px">4</div>
<div class="t" style="left:438px;top:347px">-</div>
<div class="t" style="left:528.5px;top:347px">-</div>
<div class="cb" style="left:598px;top:341px;width:126px;background:#ccfaf2"></div>
<div class="t k" style="left:599.2px;top:347px">50% (68.4)</div>
<div class="t" style="left:730.2px;top:347px">64</div>
<div class="t" style="left:796.2px;top:347px">-</div>
<div class="t" style="left:927.2px;top:347px">-</div>
<div class="t" style="left:998.2px;top:347px">-</div>
<div class="a" style="left:57px;top:31px;width:60.5px;height:30px;border:1px dotted #e0601a"></div>
</div>
<!-- media bar -->
<div class="a" style="left:27px;top:843px;width:828px;height:29px;background:linear-gradient(#f2f3f7,#e6e9ef 50%,#e3e6ec);border-bottom:2px solid #b4b8c2"></div>
<div class="a" style="left:27px;top:843px;width:70px;height:27px;background:#fafbfc"></div>
<div class="a" style="left:97px;top:843px;width:1px;height:28px;background:#c4c7d0"></div>
<div class="btn" style="left:28px;top:844px;width:22px;height:26px;border-radius:4px"></div>
<div class="btn" style="left:52px;top:844px;width:21px;height:26px;border-radius:4px"></div>
<div class="btn" style="left:75px;top:844px;width:21px;height:26px;border-radius:4px"></div>
<svg class="a" style="left:33px;top:850px" width="14" height="14" viewBox="0 0 14 14"><path d="M1 1 L13 6.5 L1 12 Z" fill="#10e010"/></svg>
<div class="a" style="left:58px;top:850px;width:3px;height:12px;background:#a0a0a0;border-left:1.5px solid #000"></div>
<div class="a" style="left:63px;top:850px;width:3px;height:12px;background:#a0a0a0;border-left:1.5px solid #000"></div>
<div class="a" style="left:79px;top:852px;width:12px;height:9px;background:#a4a4a4;border-top:1.5px solid #000;border-left:1.5px solid #000"></div>
<div class="a" style="left:108px;top:855.5px;width:732px;height:5px;border-radius:3px;background:linear-gradient(#8c92b0,#a8adc8 60%,#c0c4d6)"></div>
<svg class="a" style="left:832px;top:848px" width="14" height="22" viewBox="0 0 14 22"><path d="M1 5 Q1 1 7 1 Q13 1 13 5 L13 15 L7 21 L1 15 Z" fill="#f4f5f8" stroke="#8a90a8" stroke-width="1"/><path d="M4.5 7 H9.5 M4.5 9.5 H9.5 M4.5 12 H9.5" stroke="#9aa0b8" stroke-width="0.8"/></svg>

<!-- bottom panel -->
<div class="a" style="left:7px;top:907px;width:1551px;height:52px;background:linear-gradient(#e9ebf0 0px,#e4e6ee 4px,#e2e4ec 15px,#dcdfe9 24px,#dee1ea 27px,#e5e8ee 28px,#e6e9ef 50px,#e2e6e2 52px)"></div>
<div class="a" style="left:0;top:959px;width:1558px;height:7px;background:linear-gradient(#232850,#262b54 4px,#3b4070 5px,#2a2f58 7px)"></div>
<div class="a" style="left:0;top:28px;width:7px;height:938px;background:linear-gradient(90deg,#343a60 0px,#343a60 1px,#4a4f7c 1px,#4a4f7c 2px,#262b55 2px,#252a54 7px)"></div>
<div class="a" style="left:7px;top:907px;width:2px;height:52px;background:#f4f5f8"></div>

<!-- Learn / Add new -->
<div class="a" style="left:9px;top:908px;width:217px;height:50px;border-radius:5px;background:linear-gradient(#faa47c,#f8946a 50%,#f4875e);border:1px solid #b48a78"></div>
<div class="a" style="left:71px;top:918px;width:29px;height:30px;background:linear-gradient(#6a94c8 0%,#3a68a8 45%,#1c4a90 50%,#0c3070 100%);border:1px solid #061a50;box-shadow:inset 0 0 0 1px #8aa8d8"></div>
<div class="tb" style="left:80.5px;top:922.5px;font-size:21px;color:#fff">L</div>
<div class="tb" style="left:104.5px;top:922.5px;font-size:24px;color:#000">Learn</div>
<div class="a" style="left:228px;top:908px;width:163px;height:50px;border-radius:6px;background:linear-gradient(#e4e6ef,#d8dbe8 50%,#cdd0e0);border:1px solid #a8abb8"></div>
<svg class="a" style="left:245px;top:916px" width="33" height="33" viewBox="0 0 33 33"><defs><linearGradient id="pl" x1="0" y1="0" x2="0" y2="1"><stop offset="0" stop-color="#b8e048"/><stop offset="1" stop-color="#78b010"/></linearGradient></defs><path d="M11.5 1 H21.5 V11.5 H32 V21.5 H21.5 V32 H11.5 V21.5 H1 V11.5 H11.5 Z" fill="url(#pl)" stroke="#88b828" stroke-width="0.8"/></svg>
<div class="tb" style="left:281.5px;top:923px;font-size:24px;color:#000">Add new</div>

<!-- mini buttons -->
<div class="sep" style="left:391px;top:909px;height:22px;width:1px"></div>
<div class="btn" style="left:395px;top:908px;width:20px;height:21px;border-radius:3px"></div>
<div class="btn" style="left:417px;top:908px;width:22px;height:21px;border-radius:3px"></div>
<div class="btn" style="left:441px;top:908px;width:21px;height:21px;border-radius:3px"></div>
<div class="btn" style="left:464px;top:908px;width:22px;height:21px;border-radius:3px"></div>
<svg class="a" style="left:396px;top:909px" width="18" height="18" viewBox="0 0 18 18"><rect x="0" y="0" width="18" height="18" fill="#48e000"/><path d="M2 2 H12 V6 H9 V16 H5 V6 H2 Z" fill="#fff" stroke="#000" stroke-width="1.2"/><path d="M11 11 H17 M14 8 V14" stroke="#109010" stroke-width="2.2"/></svg>
<svg class="a" style="left:419px;top:909px" width="18" height="18" viewBox="0 0 18 18"><rect x="1" y="3" width="11" height="13" rx="1" fill="#18c018" stroke="#000" stroke-width="1"/><rect x="4" y="1" width="5" height="4" fill="#18c018" stroke="#000" stroke-width="1"/><rect x="8" y="9" width="9" height="8" fill="#fff" stroke="#1020a0" stroke-width="1.2"/><path d="M10 12 H15 M10 14.5 H15" stroke="#1020a0"/></svg>
<svg class="a" style="left:444px;top:909px" width="16" height="18" viewBox="0 0 16 18"><rect x="1" y="1" width="14" height="16" fill="#fff" stroke="#000" stroke-width="1.4"/><path d="M3.5 4 H12.5 M3.5 6.5 H12.5 M3.5 9 H12.5 M3.5 11.5 H12.5 M3.5 14 H12.5" stroke="#108010" stroke-width="1.5"/></svg>
<svg class="a" style="left:465px;top:910px" width="20" height="16" viewBox="0 0 20 16"><rect x="0" y="1" width="20" height="14" fill="#ffe040"/><text x="1.5" y="12" font-family="Liberation Sans" font-weight="bold" font-size="11" fill="#e00000">[...]</text></svg>

<!-- status labels -->
<div class="a" style="left:496px;top:907px;width:52px;height:22px;background:#78ee50"></div>
<div class="a" style="left:548px;top:907px;width:77px;height:22px;background:#9af27c"></div>
<div class="tb" style="left:501px;top:910px;font-size:16px;color:#10107a">19.6%</div>
<div class="tb" style="left:553.5px;top:910px;font-size:16px;color:#10107a">(142,571)</div>
<div class="btn" style="left:626px;top:908px;width:21px;height:21px;border-radius:3px"></div>
<svg class="a" style="left:628px;top:910px" width="17" height="17" viewBox="0 0 17 17"><rect x="0.5" y="0.5" width="16" height="16" fill="#f8c040" stroke="#000" stroke-width="1.5"/><circle cx="8.5" cy="6.5" r="3.2" fill="#fff" stroke="#000" stroke-width="1"/><rect x="7" y="9.5" width="3" height="4" fill="#fff" stroke="#000" stroke-width="0.8"/></svg>
<div class="a" style="left:649px;top:907px;width:147px;height:22px;background:#ffff00"></div>
<div class="tb" style="left:654px;top:910px;font-size:16.5px;font-weight:bold;color:#000;letter-spacing:0.2px">4yr 5mth 18 days</div>
<div class="a" style="left:796px;top:907px;width:87px;height:22px;background:#00ffff"></div>
<div class="tb" style="left:801px;top:910px;font-size:16.5px;font-weight:bold;color:#000;letter-spacing:0.4px">8 reps (1)</div>
<div class="btn" style="left:885px;top:908px;width:20px;height:21px;border-radius:3px"></div>
<svg class="a" style="left:887px;top:910px" width="16" height="16" viewBox="0 0 16 16"><rect x="0.5" y="0.5" width="15" height="15" fill="#cfd6e0" stroke="#1a1a1a" stroke-width="1.2"/><rect x="1" y="1" width="14" height="3" fill="#3a4a5a"/><rect x="3" y="7" width="10" height="5" fill="#e8eef4" stroke="#333" stroke-width="0.8"/></svg>
<div class="a" style="left:907px;top:907px;width:117px;height:22px;background:#0c0cd6"></div>
<div class="tb" style="left:912px;top:909px;font-size:17.4px;font-weight:bold;color:#fff">Sep 18, 2023</div>
<div class="btn" style="left:1026px;top:908px;width:20px;height:21px;border-radius:3px"></div>
<svg class="a" style="left:1028px;top:909px" width="17" height="18" viewBox="0 0 17 18"><rect x="0.5" y="2" width="16" height="15.5" fill="#fff" stroke="#444" stroke-width="1"/><rect x="1" y="2.5" width="15" height="4" fill="#d02020"/><text x="3" y="15" font-family="Liberation Sans" font-weight="bold" font-size="8" fill="#222">17</text><path d="M4 0.5 V4 M13 0.5 V4" stroke="#444" stroke-width="1.2"/></svg>
<div class="a" style="left:1048px;top:907px;width:57px;height:22px;background:#ff0000"></div>
<div class="tb" style="left:1057px;top:912px;font-size:11.5px;color:#6a0000">100.0%</div>
<div class="a" style="left:1105px;top:907px;width:108px;height:22px;background:#1a1af4"></div>
<div class="tb" style="left:1114px;top:912px;font-size:11px;color:#fff">32yr 7mth 24 days</div>

<!-- right icons -->
<div class="btn" style="left:1215px;top:908px;width:21px;height:21px;border-radius:3px"></div>
<div class="btn" style="left:1238px;top:908px;width:22px;height:21px;border-radius:3px"></div>
<div class="btn" style="left:1262px;top:908px;width:22px;height:21px;border-radius:3px"></div>
<div class="btn" style="left:1286px;top:908px;width:22px;height:21px;border-radius:3px"></div>
<div class="btn" style="left:1310px;top:908px;width:22px;height:21px;border-radius:3px"></div>
<div class="sep" style="left:1335px;top:910px;height:19px;width:1px"></div>
<div class="btn" style="left:1342px;top:908px;width:22px;height:21px;border-radius:3px"></div>
<div class="btn" style="left:1366px;top:908px;width:22px;height:21px;border-radius:3px"></div>
<div class="btn" style="left:1390px;top:908px;width:22px;height:21px;border-radius:3px"></div>
<div class="sep" style="left:1415px;top:910px;height:19px;width:1px"></div>
<div class="btn" style="left:1420px;top:908px;width:23px;height:21px;border-radius:3px"></div>
<div class="btn" style="left:1445px;top:908px;width:23px;height:21px;border-radius:3px"></div>
<div class="btn" style="left:1470px;top:908px;width:22px;height:21px;border-radius:3px"></div>
<svg class="a" style="left:1218px;top:911px" width="15" height="15" viewBox="0 0 15 15"><rect x="0.5" y="0.5" width="14" height="14" rx="1.5" fill="#d81818" stroke="#901010"/><path d="M4 4 L11 11 M11 4 L4 11" stroke="#fff" stroke-width="2.2"/></svg>
<svg class="a" style="left:1241px;top:910px" width="17" height="16" viewBox="0 0 17 16"><rect x="0.5" y="0.5" width="16" height="15" fill="#f0f6fc" stroke="#3a8ad0" stroke-width="1.2"/><rect x="3" y="3" width="11" height="2.5" fill="#3a8ad0"/><rect x="3" y="7.5" width="4" height="5" fill="none" stroke="#3a8ad0"/><rect x="9" y="8" width="5" height="4" fill="#9ac4e8"/></svg>
<svg class="a" style="left:1265px;top:909px" width="17" height="19" viewBox="0 0 17 19"><text x="0" y="13" font-family="Liberation Serif" font-weight="bold" font-size="15" fill="#c02020">T</text><text x="5" y="18" font-family="Liberation Serif" font-weight="bold" font-size="15" fill="#111">T</text></svg>
<svg class="a" style="left:1289px;top:910px" width="17" height="17" viewBox="0 0 17 17"><rect x="0.5" y="0.5" width="16" height="16" rx="4" fill="#d05818" stroke="#903810"/><text x="1.8" y="11" font-family="Liberation Sans" font-weight="bold" font-size="5.5" fill="#fff">HTML</text></svg>
<svg class="a" style="left:1313px;top:910px" width="17" height="17" viewBox="0 0 17 17"><rect x="3" y="3" width="11" height="11" fill="#b8d0ec" stroke="#3a70d0"/><path d="M8.5 0 L6 3 H11 Z M8.5 17 L6 14 H11 Z M0 8.5 L3 6 V11 Z M17 8.5 L14 6 V11 Z" fill="#3a70d0"/></svg>
<svg class="a" style="left:1346px;top:909px" width="15" height="18" viewBox="0 0 15 18"><path d="M3 0.5 H10 L14 4 V17.5 H3 Z" fill="#fbf4dc" stroke="#b8b090" stroke-width="0.8"/><path d="M1 2.5 H8 L12 6 V17.5 H1 Z" fill="#fdf8e8" stroke="#a8a080" stroke-width="0.8"/></svg>
<svg class="a" style="left:1368px;top:910px" width="18" height="17" viewBox="0 0 18 17"><rect x="0.5" y="0.5" width="9" height="11" fill="#fff" stroke="#000" stroke-width="1.2"/><path d="M2.5 4 H7 M2.5 6.5 H7" stroke="#000"/><rect x="7.5" y="5.5" width="10" height="11" fill="#fff" stroke="#000050" stroke-width="1.2"/><path d="M9.5 9 H15.5 M9.5 11.5 H15.5 M9.5 14 H15.5" stroke="#000050"/></svg>
<svg class="a" style="left:1393px;top:909px" width="16" height="19" viewBox="0 0 16 19"><rect x="1" y="3" width="14" height="15" fill="#d8a030" stroke="#705010" stroke-width="1"/><rect x="3" y="5" width="10" height="11" fill="#f8f8f0" stroke="#888" stroke-width="0.6"/><rect x="5" y="1" width="6" height="4" fill="#aaa" stroke="#555" stroke-width="0.8"/></svg>
<svg class="a" style="left:1424px;top:909px" width="17" height="19" viewBox="0 0 17 19"><path d="M4 0.5 H12 L16 4.5 V18.5 H4 Z" fill="#e4f0f8" stroke="#8ab0d0" stroke-width="0.8"/><path d="M0.5 10 H8 M5 7 L8 10 L5 13" stroke="#5a98d0" stroke-width="1.8" fill="none"/></svg>
<svg class="a" style="left:1448px;top:909px" width="18" height="19" viewBox="0 0 18 19"><rect x="0.5" y="1" width="13" height="16" fill="#3a88d0" stroke="#1a5aa0" stroke-width="0.8"/><rect x="3" y="4" width="8" height="2" fill="#fff"/><rect x="3" y="8" width="8" height="2" fill="#fff"/><path d="M8 17 L16 7" stroke="#f0a020" stroke-width="3"/></svg>
<svg class="a" style="left:1472px;top:910px" width="17" height="17" viewBox="0 0 17 17"><circle cx="8.5" cy="8.5" r="7.8" fill="#a01060" stroke="#601040" stroke-width="0.8"/><text x="4.6" y="13.5" font-family="Liberation Sans" font-weight="bold" font-size="13" fill="#fff">?</text></svg>

<!-- tabs -->
<div class="a" style="left:394px;top:932px;width:75px;height:26px;border-radius:4px 4px 0 0;background:linear-gradient(#f2f3f8,#e8eaf2);border:1px solid #c8cbd8;border-bottom:none"></div>
<div class="a" style="left:470px;top:933px;width:60px;height:23px;border-radius:4px 4px 4px 4px;background:linear-gradient(#d2d5e2,#c8ccdb);border:1px solid #b0b4c6"></div>
<div class="a" style="left:531px;top:933px;width:71px;height:23px;border-radius:4px;background:linear-gradient(#d2d5e2,#c8ccdb);border:1px solid #b0b4c6"></div>
<div class="a" style="left:603px;top:933px;width:103px;height:23px;border-radius:4px;background:linear-gradient(#d2d5e2,#c8ccdb);border:1px solid #b0b4c6"></div>
<div class="a" style="left:707px;top:933px;width:72px;height:23px;border-radius:4px;background:linear-gradient(#d2d5e2,#c8ccdb);border:1px solid #b0b4c6"></div>
<div class="a" style="left:780px;top:933px;width:74px;height:23px;border-radius:4px;background:linear-gradient(#d2d5e2,#c8ccdb);border:1px solid #b0b4c6"></div>
<svg class="a" style="left:397px;top:936px" width="17" height="17" viewBox="0 0 17 17"><rect x="0" y="0" width="17" height="17" fill="#0000e0"/><path d="M5 3 H8.5 V11 H13 V14 H5 Z" fill="#fff" stroke="#000" stroke-width="0.8"/></svg>
<div class="tb" style="left:419.5px;top:937px;font-size:16px;color:#000">Learn</div>
<svg class="a" style="left:473px;top:935px" width="17" height="17" viewBox="0 0 17 17"><rect x="0" y="0" width="17" height="17" fill="#fff"/><text x="1.5" y="15" font-family="Liberation Serif" font-weight="bold" font-size="17" fill="#3a6aa0">A</text></svg>
<div class="tb" style="left:495px;top:937px;font-size:16px;color:#5a6488">Edit</div>
<svg class="a" style="left:533px;top:935px" width="18" height="17" viewBox="0 0 18 17"><path d="M1 4 L9 1 L17 8 L9 12 Z" fill="#3a8ae0" stroke="#1a4aa0"/><path d="M1 4 L1 8 L9 16 L17 12 L17 8 L9 12 Z" fill="#1a5ac8" stroke="#0a3a90"/><path d="M3 9 L9 14 L15 11" stroke="#f8e060" stroke-width="1.5" fill="none"/></svg>
<div class="tb" style="left:556px;top:937px;font-size:16px;color:#5a6488">Read</div>
<svg class="a" style="left:606px;top:934px" width="18" height="18" viewBox="0 0 18 18"><path d="M2 6 L9 3 L16 6 L16 14 L9 17 L2 14 Z" fill="#98c840" stroke="#6a9a20" stroke-width="0.8"/><path d="M2 6 L9 9 L16 6 M9 9 V17" stroke="#d8f0a0" stroke-width="1" fill="none"/><rect x="1" y="1" width="5" height="5" fill="#f0a040"/></svg>
<div class="tb" style="left:629px;top:937px;font-size:16px;color:#5a6488">Compose</div>
<svg class="a" style="left:709px;top:935px" width="17" height="17" viewBox="0 0 17 17"><path d="M3 3 L14 14" stroke="#666" stroke-width="3.5" stroke-linecap="round"/><circle cx="3.5" cy="3.5" r="3" fill="none" stroke="#666" stroke-width="2"/></svg>
<div class="tb" style="left:733px;top:937px;font-size:16px;color:#5a6488">Tools</div>
<svg class="a" style="left:782px;top:935px" width="17" height="17" viewBox="0 0 17 17"><circle cx="8.5" cy="9.5" r="6" fill="#f4f8fa" stroke="#4a5a6a" stroke-width="1.6"/><circle cx="3.5" cy="3.5" r="2.5" fill="#5a6a7a"/><circle cx="13.5" cy="3.5" r="2.5" fill="#5a6a7a"/><path d="M8.5 6 V9.5 H11" stroke="#333" fill="none"/></svg>
<div class="tb" style="left:806px;top:937px;font-size:16px;color:#5a6488">Alarm</div>
</body></html>
